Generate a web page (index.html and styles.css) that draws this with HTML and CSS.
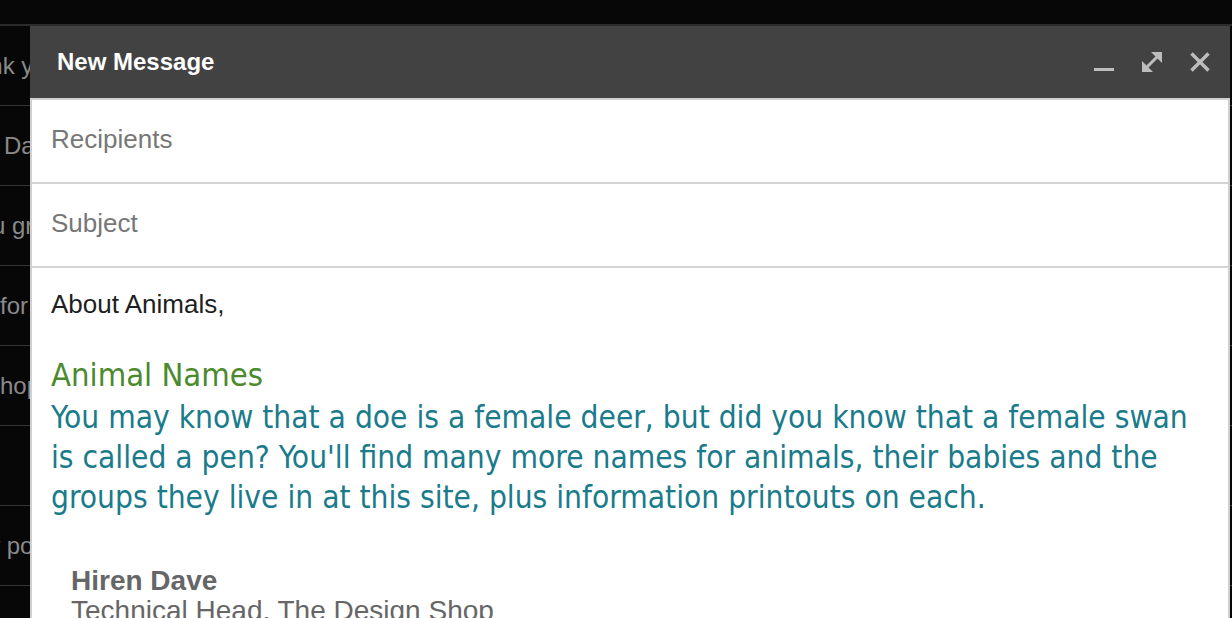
FILE: index.html
```html
<!DOCTYPE html>
<html lang="en">
<head>
<meta charset="utf-8">
<title>New Message</title>
<link rel="stylesheet" href="styles.css">
</head>
<body>
<div class="topbar"></div>
<ul class="inbox">
  <li><span class="snippet"><span class="snippet-text">Thank you</span></span></li>
  <li><span class="snippet"><span class="snippet-text">Hi Dave</span></span></li>
  <li><span class="snippet"><span class="snippet-text">Did you grab</span></span></li>
  <li><span class="snippet"><span class="snippet-text">Offer for Ali</span></span></li>
  <li><span class="snippet"><span class="snippet-text">Workshop 2</span></span></li>
  <li><span class="snippet"></span></li>
  <li><span class="snippet"><span class="snippet-text">New ports</span></span></li>
  <li><span class="snippet"></span></li>
</ul>
<section class="compose">
  <header class="compose-head">
    <h1 class="compose-title">New Message</h1>
    <div class="actions">
      <svg class="icon" viewBox="0 0 24 24" width="24" height="24"><rect x="2" y="18" width="20" height="3" fill="#bdbdbd"/></svg>
      <svg class="icon" viewBox="0 0 24 24" width="24" height="24"><polygon points="22,2 11,2 22,13" fill="#bdbdbd"/><polygon points="2,22 2,11 13,22" fill="#bdbdbd"/><line x1="5" y1="19" x2="19" y2="5" stroke="#bdbdbd" stroke-width="3"/></svg>
      <svg class="icon" viewBox="0 0 24 24" width="24" height="24"><path d="M3.5 3.5 L20.5 20.5 M20.5 3.5 L3.5 20.5" stroke="#bdbdbd" stroke-width="3.4" fill="none"/></svg>
    </div>
  </header>
  <div class="compose-body">
    <div class="field">Recipients</div>
    <div class="field">Subject</div>
    <div class="editor">
      <p class="greet">About Animals,</p>
      <h2 class="topic">Animal Names</h2>
      <p class="blurb">You may know that a doe is a female deer, but did you know that a female swan is called a pen? You'll find many more names for animals, their babies and the groups they live in at this site, plus information printouts on each.</p>
      <div class="sig">
        <strong class="sig-name">Hiren Dave</strong>
        <span class="sig-role">Technical Head, The Design Shop</span>
      </div>
    </div>
  </div>
</section>
</body>
</html>
```
FILE: styles.css
```css
html, body {
  margin: 0;
  padding: 0;
}
body {
  background: #070707;
  height: 618px;
  overflow: hidden;
  position: relative;
  font-family: "Liberation Sans", Arial, sans-serif;
}
.topbar {
  height: 24px;
  border-bottom: 2px solid #2b2b2b;
}
.inbox {
  list-style: none;
  margin: 0;
  padding: 0;
}
.inbox li {
  height: 79px;
  border-bottom: 1px solid #333;
}
.snippet {
  display: flex;
  justify-content: flex-end;
  width: 60px;
  overflow: hidden;
  line-height: 79px;
  font-size: 24px;
  color: #8a8a8a;
}
.snippet-text {
  flex: none;
  white-space: nowrap;
}
.compose {
  position: absolute;
  top: 26px;
  left: 30px;
  width: 1200px;
  bottom: 0;
  display: flex;
  flex-direction: column;
}
.compose-head {
  height: 72px;
  flex: none;
  background: #424242;
  display: flex;
  align-items: center;
  justify-content: space-between;
  padding: 0 18px 0 27px;
}
.compose-title {
  margin: 0;
  font-size: 24px;
  font-weight: bold;
  color: #fff;
}
.actions {
  display: flex;
  gap: 24px;
}
.icon {
  display: block;
}
.compose-body {
  flex: 1;
  background: #fff;
  border: 2px solid #d0d0d0;
  border-bottom: none;
}
.field {
  height: 78px;
  border-bottom: 2px solid #d4d4d4;
  padding: 0 0 4px 19px;
  display: flex;
  align-items: center;
  font-size: 26px;
  color: #777;
}
.editor {
  padding: 21px 19px 0;
}
.greet {
  margin: 0;
  font-size: 26px;
  line-height: 30px;
  color: #1e1e1e;
}
.topic {
  margin: 34px 0 0;
  font-family: "DejaVu Sans Condensed", "DejaVu Sans", sans-serif;
  font-stretch: condensed;
  font-weight: normal;
  font-size: 32.5px;
  line-height: 44px;
  color: #4b8a2d;
}
.blurb {
  margin: 0;
  font-family: "DejaVu Sans Condensed", "DejaVu Sans", sans-serif;
  font-stretch: condensed;
  font-size: 31.4px;
  line-height: 40px;
  color: #1a7b8b;
}
.sig {
  margin: 49px 0 0 20px;
  font-size: 28px;
  line-height: 30px;
  color: #666;
  display: flex;
  flex-direction: column;
}
.sig-name {
  font-weight: bold;
}
```
